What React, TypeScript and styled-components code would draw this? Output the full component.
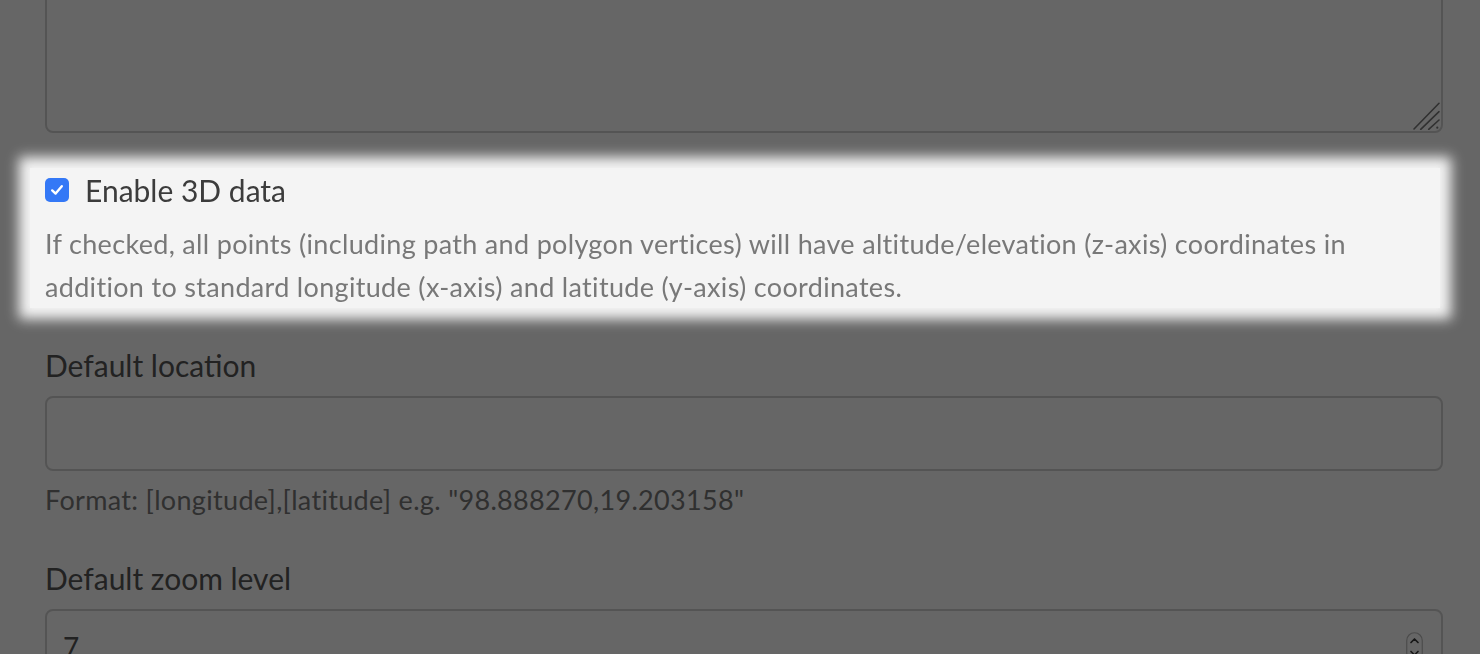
import React from 'react'
import styled, { createGlobalStyle } from 'styled-components'

const GlobalStyle = createGlobalStyle`
  html, body {
    margin: 0;
    padding: 0;
    background: #ffffff;
    overflow: hidden;
  }
  body {
    font-family: Lato, 'Noto Sans', sans-serif;
    color: #555555;
  }
`

export default function App() {
  return (
    <>
      <GlobalStyle />
      <Page>
        <Field>
          <TextAreaWrap>
            <TextArea />
            <Grip width="28" height="28" viewBox="0 0 28 28">
              <path
                d="M26 1.3 L1 27 M26 9.7 L7.7 27.3 M26 18 L15.7 27.3"
                stroke="#7a7a7a"
                strokeWidth="1.6"
                strokeLinecap="round"
              />
              <circle cx="24.3" cy="25.7" r="1.1" fill="#7a7a7a" />
            </Grip>
          </TextAreaWrap>
        </Field>

        <Highlight>
          <CheckRow>
            <HiddenInput type="checkbox" defaultChecked />
            <CheckBox>
              <svg width="16" height="16" viewBox="0 0 16 16">
                <path d="M3.2 8.4 L6.6 11.6 L12.8 4.2" fill="none" stroke="#ffffff" strokeWidth="2.4" strokeLinecap="round" strokeLinejoin="round" />
              </svg>
            </CheckBox>
            <CheckLabel>Enable 3D data</CheckLabel>
          </CheckRow>
          <Help $top={20}>
            If checked, all points (including path and polygon vertices) will have altitude/elevation (z-axis)
            coordinates in addition to standard longitude (x-axis) and latitude (y-axis) coordinates.
          </Help>
        </Highlight>

        <Field $top={37}>
          <Label>Default location</Label>
          <Input />
          <Help $top={7}>Format: [longitude],[latitude] e.g. "98.888270,19.203158"</Help>
        </Field>

        <Field $top={37}>
          <Label>Default zoom level</Label>
          <NumberBox>
            <NumberValue defaultValue="7" />
            <Stepper width="17" height="30" viewBox="0 0 17 30">
              <rect x="0.75" y="0.75" width="15.5" height="28.5" rx="7.75" fill="none" stroke="#bdbdbd" strokeWidth="1.2" />
              <path d="M5 10.5 L8.5 7 L12 10.5" fill="none" stroke="#3a3a3a" strokeWidth="1.7" strokeLinecap="round" strokeLinejoin="round" />
              <path d="M5 19.5 L8.5 23 L12 19.5" fill="none" stroke="#3a3a3a" strokeWidth="1.7" strokeLinecap="round" strokeLinejoin="round" />
            </Stepper>
          </NumberBox>
        </Field>
      </Page>
      <Dim />
    </>
  )
}

const Page = styled.main`
  width: 1398px;
  padding: 0 37px 0 45px;
  margin-top: -30px;
  display: flex;
  flex-direction: column;
`

const Field = styled.section<{ $top?: number }>`
  display: flex;
  flex-direction: column;
  margin-top: ${({ $top }) => $top ?? 0}px;
`

const TextAreaWrap = styled.div`
  position: relative;
  display: flex;
`

const TextArea = styled.textarea`
  box-sizing: border-box;
  width: 100%;
  height: 163px;
  border: 2px solid #d2d2d2;
  border-radius: 8px;
  background: #ffffff;
  resize: none;
  outline: none;
`

const Grip = styled.svg`
  position: absolute;
  right: 2px;
  bottom: 3px;
`

const Highlight = styled.div`
  position: relative;
  z-index: 2;
  margin: 35px 3px 0 -15px;
  padding: 10px 0 0 15px;
  background: #f4f4f4;
  box-shadow: 0 0 12px 11px #f4f4f4;
`

const CheckRow = styled.label`
  display: flex;
  align-items: center;
  gap: 16px;
  height: 24px;
`

const HiddenInput = styled.input`
  display: none;
`

const CheckBox = styled.span`
  width: 24px;
  height: 24px;
  border-radius: 5px;
  background: #3478f6;
  display: flex;
  align-items: center;
  justify-content: center;
  flex-shrink: 0;
`

const CheckLabel = styled.span`
  font-size: 30px;
  line-height: 24px;
  color: #3c3c3c;
`

const Help = styled.p<{ $top: number }>`
  margin: ${({ $top }) => $top}px 0 0;
  font-size: 27px;
  letter-spacing: 0.32px;
  line-height: 43px;
  color: #787878;
`

const Label = styled.label`
  font-size: 30px;
  line-height: 40px;
  color: #555555;
  margin-bottom: 11px;
`

const Input = styled.input`
  box-sizing: border-box;
  height: 75px;
  width: 100%;
  border: 2px solid #d2d2d2;
  border-radius: 8px;
  background: #ffffff;
  outline: none;
`

const NumberBox = styled.div`
  box-sizing: border-box;
  height: 75px;
  width: 100%;
  border: 2px solid #d2d2d2;
  border-radius: 8px;
  background: #ffffff;
  display: flex;
  align-items: center;
  padding: 0 18px 0 16px;
`

const NumberValue = styled.input`
  flex: 1;
  border: none;
  outline: none;
  background: transparent;
  font-family: Lato, 'Noto Sans', sans-serif;
  font-size: 28px;
  color: #555555;
  padding: 0;
`

const Stepper = styled.svg`
  flex-shrink: 0;
`

const Dim = styled.div`
  position: fixed;
  inset: 0;
  z-index: 1;
  background: rgba(0, 0, 0, 0.6);
`
